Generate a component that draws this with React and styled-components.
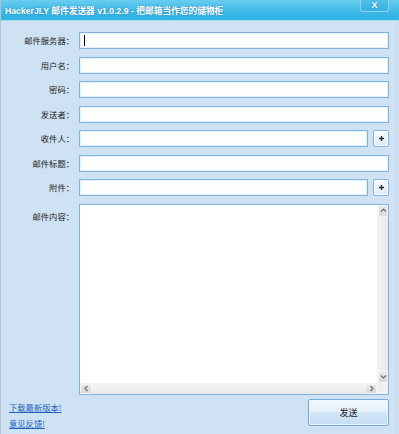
import React from 'react';
import styled, { createGlobalStyle } from 'styled-components';

const GlobalStyle = createGlobalStyle`
    html, body {
        margin: 0;
        padding: 0;
    }
    body {
        font-family: "Noto Sans CJK SC", "Liberation Sans", sans-serif;
        background: #cfe2f4;
    }
`;

const Window = styled.div`
    width: 399px;
    height: 434px;
    box-sizing: border-box;
    display: flex;
    flex-direction: column;
    background: #cfe2f4;
    border-left: 1px solid #b3c3d3;
    box-shadow: inset -5px 0 0 #cbdff1, inset -6px 0 0 #dcebf8;
    overflow: hidden;
`;

const TitleBar = styled.div`
    height: 20px;
    flex: none;
    display: flex;
    align-items: flex-start;
    padding-left: 4px;
    background: linear-gradient(#69cdf1, #3bb8e6 60%, #2fb2e3);
    border-bottom: 1px solid #a9d8f0;
`;

const Title = styled.div`
    margin-top: 5px;
    font: bold 8.7px "Liberation Sans", "Noto Sans CJK SC", sans-serif;
    line-height: 12px;
    color: #fff;
    text-shadow: 0 0 2px rgba(10, 80, 130, 0.6);
    white-space: nowrap;
`;

const CloseButton = styled.div`
    margin-left: auto;
    margin-right: 10px;
    width: 29px;
    height: 12px;
    box-sizing: border-box;
    border: 1px solid #8fd3f2;
    border-top: none;
    border-radius: 0 0 3px 3px;
    background: linear-gradient(#4fc0ea, #36b3e3);
    color: #fff;
    font: bold 9px "Liberation Sans", sans-serif;
    line-height: 11px;
    text-align: center;
    text-shadow: 0 0 2px rgba(10, 80, 130, 0.6);
`;

const Form = styled.div`
    display: flex;
    flex-direction: column;
    gap: 7.5px;
    padding: 11px 10px 0 0;
`;

const Row = styled.div`
    display: flex;
    align-items: ${props => (props.top ? 'flex-start' : 'center')};
`;

const Label = styled.div`
    width: 78px;
    flex: none;
    box-sizing: border-box;
    padding-right: 5px;
    padding-top: ${props => (props.top ? '4px' : '0')};
    text-align: right;
    font-size: 8.3px;
    line-height: 17px;
    color: #1c1c1c;
    white-space: nowrap;
`;

const FieldWrap = styled.div`
    position: relative;
    flex: 1;
    display: flex;
`;

const Input = styled.input`
    flex: 1;
    min-width: 0;
    height: 17px;
    box-sizing: border-box;
    margin: 0;
    padding: 0 4px;
    border: 1px solid #7fb4df;
    box-shadow: inset 0 0 0 1px #e4f0fa;
    background: #fdfefe;
    font-size: 9px;
    outline: none;
`;

const Caret = styled.span`
    position: absolute;
    left: 5px;
    top: 3px;
    width: 1px;
    height: 11px;
    background: #000;
`;

const PlusButton = styled.div`
    flex: none;
    width: 16px;
    height: 17px;
    margin-left: 5px;
    box-sizing: border-box;
    border: 1px solid #7fb4df;
    border-radius: 2px;
    background: linear-gradient(#f7fbfe, #dcebf8);
    box-shadow: inset 0 0 0 1px #ffffff;
    display: flex;
    align-items: center;
    justify-content: center;
`;

const TextBox = styled.div`
    flex: 1;
    height: 191px;
    box-sizing: border-box;
    border: 1px solid #7fb4df;
    background: #fff;
    display: grid;
    grid-template-columns: 1fr 11px;
    grid-template-rows: 1fr 11px;
`;

const TextArea = styled.textarea`
    border: none;
    margin: 0;
    padding: 3px;
    resize: none;
    outline: none;
    overflow: hidden;
    font-size: 9px;
    background: #fff;
`;

const VScroll = styled.div`
    display: flex;
    flex-direction: column;
    background: linear-gradient(90deg, #f4f4f4, #e9e9e9);
    border-left: 1px solid #f0f0f0;
`;

const HScroll = styled.div`
    display: flex;
    background: linear-gradient(#f4f4f4, #e9e9e9);
    border-top: 1px solid #f0f0f0;
`;

const Track = styled.div`
    flex: 1;
`;

const ArrowButton = styled.div`
    flex: none;
    width: ${props => (props.horizontal ? '10px' : 'auto')};
    height: ${props => (props.horizontal ? 'auto' : '10px')};
    background: linear-gradient(#e8e8e8, #d8d8d8);
    border: 1px solid #f6f6f6;
    border-radius: 1px;
    display: flex;
    align-items: center;
    justify-content: center;
`;

const Corner = styled.div`
    background: #f0f0f0;
`;

const Footer = styled.div`
    display: flex;
    justify-content: space-between;
    align-items: flex-start;
    padding: 4px 10px 0 8px;
`;

const Links = styled.div`
    display: flex;
    flex-direction: column;
`;

const Link = styled.a`
    font-size: 8.3px;
    line-height: 16px;
    color: #1d63bd;
    text-decoration: underline;
    cursor: pointer;
`;

const SendButton = styled.button`
    width: 81px;
    height: 27px;
    margin: 0;
    padding: 0;
    box-sizing: border-box;
    border: 1px solid #73acdc;
    border-radius: 2px;
    background: linear-gradient(#f3f9fe, #e4f0fa 45%, #cfe4f6 55%, #c6def3);
    box-shadow: inset 0 0 0 1px #eaf4fc;
    font-family: "Noto Sans CJK SC", sans-serif;
    font-size: 9px;
    color: #1c1c1c;
`;

const Chevron = ({ dir }) => {
    const paths = {
        up: 'M1 4.5 L3.5 2 L6 4.5',
        down: 'M1 2.5 L3.5 5 L6 2.5',
        left: 'M4.5 1 L2 3.5 L4.5 6',
        right: 'M2.5 1 L5 3.5 L2.5 6',
    };
    return (
        <svg width="7" height="7" viewBox="0 0 7 7">
            <path d={paths[dir]} fill="none" stroke="#6e6e6e" strokeWidth="1.2" />
        </svg>
    );
};

const Plus = () => (
    <svg width="7" height="7" viewBox="0 0 7 7">
        <path d="M3.5 1 V6 M1 3.5 H6" stroke="#2a2a2a" strokeWidth="1.3" />
    </svg>
);

const fields = [
    { label: '邮件服务器：', caret: true },
    { label: '用户名：' },
    { label: '密码：', type: 'password' },
    { label: '发送者：' },
    { label: '收件人：', plus: true },
    { label: '邮件标题：' },
    { label: '附件：', plus: true },
];

const App = () => (
    <>
        <GlobalStyle />
        <Window>
            <TitleBar>
                <Title>HackerJLY 邮件发送器 v1.0.2.9 - 把邮箱当作您的储物柜</Title>
                <CloseButton>X</CloseButton>
            </TitleBar>
            <Form>
                {fields.map(f => (
                    <Row key={f.label}>
                        <Label>{f.label}</Label>
                        <FieldWrap>
                            <Input type={f.type || 'text'} />
                            {f.caret && <Caret />}
                        </FieldWrap>
                        {f.plus && <PlusButton><Plus /></PlusButton>}
                    </Row>
                ))}
                <Row top>
                    <Label top>邮件内容：</Label>
                    <TextBox>
                        <TextArea />
                        <VScroll>
                            <ArrowButton><Chevron dir="up" /></ArrowButton>
                            <Track />
                            <ArrowButton><Chevron dir="down" /></ArrowButton>
                        </VScroll>
                        <HScroll>
                            <ArrowButton horizontal><Chevron dir="left" /></ArrowButton>
                            <Track />
                            <ArrowButton horizontal><Chevron dir="right" /></ArrowButton>
                        </HScroll>
                        <Corner />
                    </TextBox>
                </Row>
            </Form>
            <Footer>
                <Links>
                    <Link>下载最新版本!</Link>
                    <Link>意见反馈!</Link>
                </Links>
                <SendButton>发送</SendButton>
            </Footer>
        </Window>
    </>
);

export default App;
